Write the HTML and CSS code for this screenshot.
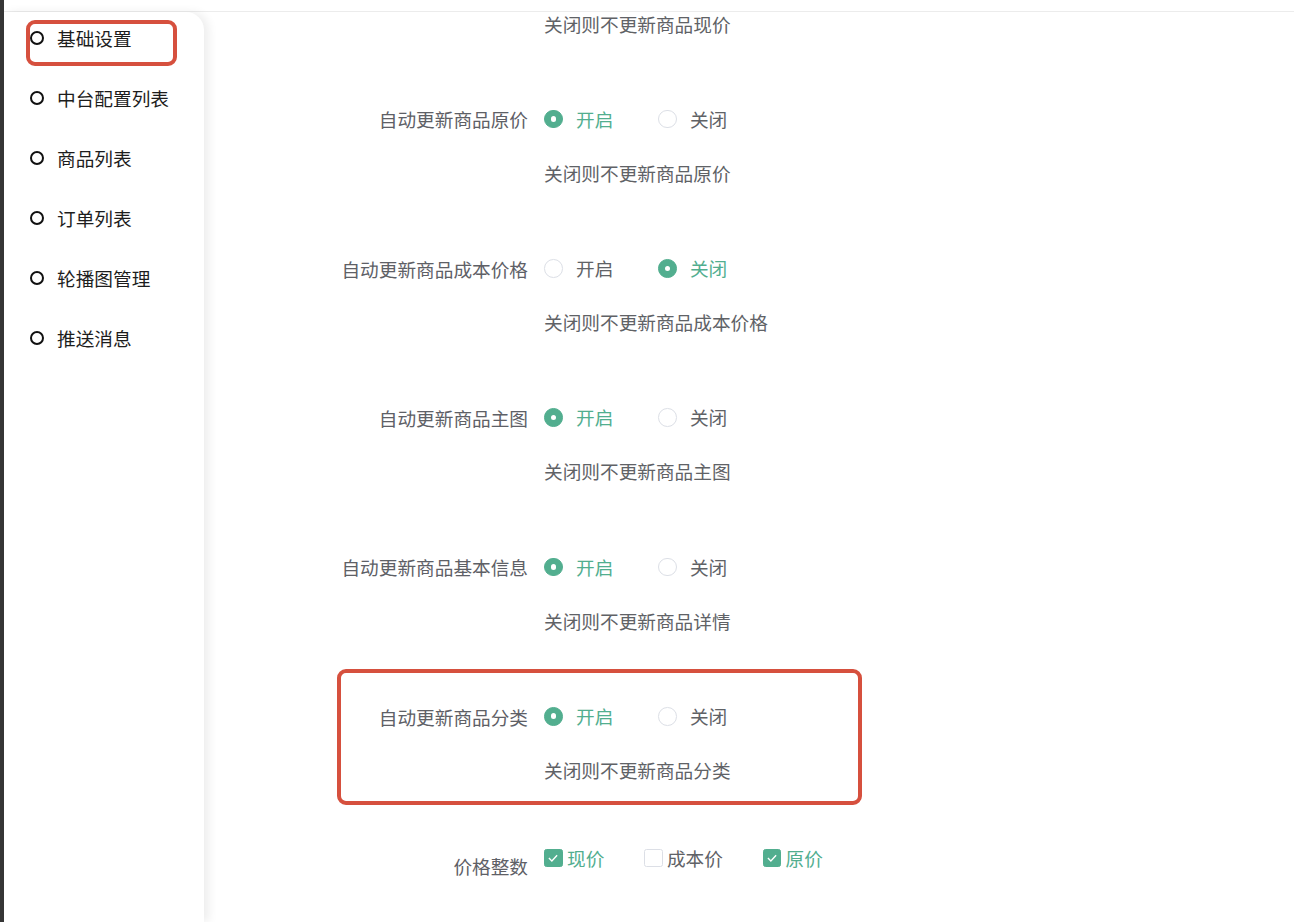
FILE: index.html
```html
<!DOCTYPE html>
<html lang="zh-CN">
<head>
<meta charset="utf-8">
<title>基础设置</title>
<link rel="stylesheet" href="styles.css">
</head>
<body>
<div class="strip"></div>
<div class="app">
  <div class="topbar"></div>
  <div class="layout">
    <aside class="sidebar">
      <ul class="menu">
        <li class="menu-item"><span class="dot"></span><span>基础设置</span></li>
        <li class="menu-item"><span class="dot"></span><span>中台配置列表</span></li>
        <li class="menu-item"><span class="dot"></span><span>商品列表</span></li>
        <li class="menu-item"><span class="dot"></span><span>订单列表</span></li>
        <li class="menu-item"><span class="dot"></span><span>轮播图管理</span></li>
        <li class="menu-item"><span class="dot"></span><span>推送消息</span></li>
      </ul>
    </aside>
    <main class="main">
      <div class="form">
        <div class="hint first">关闭则不更新商品现价</div>

        <div class="item">
          <div class="row"><label class="label">自动更新商品原价</label>
            <div class="radios">
              <span class="radio on"><span class="circle"></span><span class="rtext">开启</span></span>
              <span class="radio"><span class="circle"></span><span class="rtext">关闭</span></span>
            </div>
          </div>
          <div class="hint">关闭则不更新商品原价</div>
        </div>

        <div class="item">
          <div class="row"><label class="label">自动更新商品成本价格</label>
            <div class="radios">
              <span class="radio"><span class="circle"></span><span class="rtext">开启</span></span>
              <span class="radio on"><span class="circle"></span><span class="rtext">关闭</span></span>
            </div>
          </div>
          <div class="hint">关闭则不更新商品成本价格</div>
        </div>

        <div class="item">
          <div class="row"><label class="label">自动更新商品主图</label>
            <div class="radios">
              <span class="radio on"><span class="circle"></span><span class="rtext">开启</span></span>
              <span class="radio"><span class="circle"></span><span class="rtext">关闭</span></span>
            </div>
          </div>
          <div class="hint">关闭则不更新商品主图</div>
        </div>

        <div class="item">
          <div class="row"><label class="label">自动更新商品基本信息</label>
            <div class="radios">
              <span class="radio on"><span class="circle"></span><span class="rtext">开启</span></span>
              <span class="radio"><span class="circle"></span><span class="rtext">关闭</span></span>
            </div>
          </div>
          <div class="hint">关闭则不更新商品详情</div>
        </div>

        <div class="item">
          <div class="row"><label class="label">自动更新商品分类</label>
            <div class="radios">
              <span class="radio on"><span class="circle"></span><span class="rtext">开启</span></span>
              <span class="radio"><span class="circle"></span><span class="rtext">关闭</span></span>
            </div>
          </div>
          <div class="hint">关闭则不更新商品分类</div>
        </div>

        <div class="item">
          <div class="row top"><label class="label">价格整数</label>
            <div class="checks">
              <span class="check on"><span class="box"><svg viewBox="0 0 14 14" width="16" height="16"><path d="M3.4 7.1 L6 9.6 L10.6 4.6" fill="none" stroke="#fff" stroke-width="1.2"/></svg></span><span class="ctext">现价</span></span>
              <span class="check"><span class="box"></span><span class="ctext">成本价</span></span>
              <span class="check on"><span class="box"><svg viewBox="0 0 14 14" width="16" height="16"><path d="M3.4 7.1 L6 9.6 L10.6 4.6" fill="none" stroke="#fff" stroke-width="1.2"/></svg></span><span class="ctext">原价</span></span>
            </div>
          </div>
        </div>
      </div>
    </main>
  </div>
</div>
<div class="mark mark-menu"></div>
<div class="mark mark-form"></div>
</body>
</html>
```

FILE: styles.css
```css
html, body {
  margin: 0;
  padding: 0;
  height: 922px;
  overflow: hidden;
  background: #fff;
}
body {
  display: flex;
  font-family: "Noto Sans CJK SC", "Noto Sans", sans-serif;
  font-size: 18.67px;
}
.strip {
  width: 4px;
  flex: none;
  background: #363636;
}
.app {
  flex: 1;
  display: flex;
  flex-direction: column;
  min-width: 0;
}
.topbar {
  height: 11px;
  flex: none;
  border-bottom: 1px solid #ececec;
}
.layout {
  flex: 1;
  display: flex;
  min-height: 0;
}
.sidebar {
  width: 200px;
  flex: none;
  background: #fff;
  border-top-right-radius: 18px;
  box-shadow: 5px 0 10px rgba(0, 0, 0, 0.07);
  position: relative;
  z-index: 1;
}
.menu {
  list-style: none;
  margin: -4px 0 0 0;
  padding: 0;
}
.menu-item {
  height: 60px;
  display: flex;
  align-items: center;
  padding-left: 26px;
  color: #1d1d1d;
  line-height: 1;
}
.dot {
  width: 14px;
  height: 14px;
  box-sizing: border-box;
  border: 2.8px solid #111;
  border-radius: 50%;
  margin-right: 13px;
  flex: none;
}
.main {
  flex: 1;
  min-width: 0;
  overflow: hidden;
}
.form {
  padding-left: 340px;
}
.hint {
  line-height: 53.33px;
  height: 53.33px;
  color: #606266;
  white-space: nowrap;
}
.hint.first {
  line-height: 24px;
  height: 24px;
  margin-bottom: 56.33px;
}
.item {
  margin-top: 42.67px;
}
.row {
  display: flex;
  align-items: center;
  height: 53.33px;
  margin-left: -340px;
}
.row.top {
  align-items: flex-start;
}
.label {
  width: 324px;
  padding-right: 16px;
  text-align: right;
  color: #5e6066;
  line-height: 53.33px;
  flex: none;
  white-space: nowrap;
}
.radios {
  display: flex;
  align-items: center;
}
.radio {
  display: inline-flex;
  align-items: center;
  margin-right: 44.67px;
  color: #606266;
  white-space: nowrap;
}
.circle {
  width: 18.67px;
  height: 18.67px;
  box-sizing: border-box;
  border: 1px solid #dcdfe6;
  border-radius: 50%;
  background: #fff;
  display: inline-flex;
  align-items: center;
  justify-content: center;
}
.rtext {
  margin-left: 13.33px;
  line-height: 1;
}
.radio.on {
  color: #52ae8f;
}
.radio.on .circle {
  background: #52ae8f;
  border-color: #52ae8f;
}
.radio.on .circle::after {
  content: "";
  width: 5.5px;
  height: 5.5px;
  border-radius: 50%;
  background: #fff;
}
.checks {
  display: flex;
  align-items: center;
  height: 40px;
  margin-top: -1px;
}
.check {
  display: inline-flex;
  align-items: center;
  margin-right: 39.67px;
  color: #606266;
  white-space: nowrap;
}
.box {
  width: 18.67px;
  height: 18.67px;
  box-sizing: border-box;
  border: 1px solid #dcdfe6;
  border-radius: 2.5px;
  background: #fff;
  display: inline-flex;
  align-items: center;
  justify-content: center;
}
.check.on {
  color: #52ae8f;
}
.check.on .box {
  background: #52ae8f;
  border-color: #52ae8f;
}
.ctext {
  margin-left: 4.33px;
  line-height: 1;
}
.mark {
  position: absolute;
  box-sizing: border-box;
  border: 4px solid #d6503e;
  border-radius: 9px;
  pointer-events: none;
  z-index: 5;
}
.mark-menu {
  left: 26px;
  top: 20px;
  width: 151px;
  height: 46px;
}
.mark-form {
  left: 337px;
  top: 669px;
  width: 525px;
  height: 136px;
}
```
